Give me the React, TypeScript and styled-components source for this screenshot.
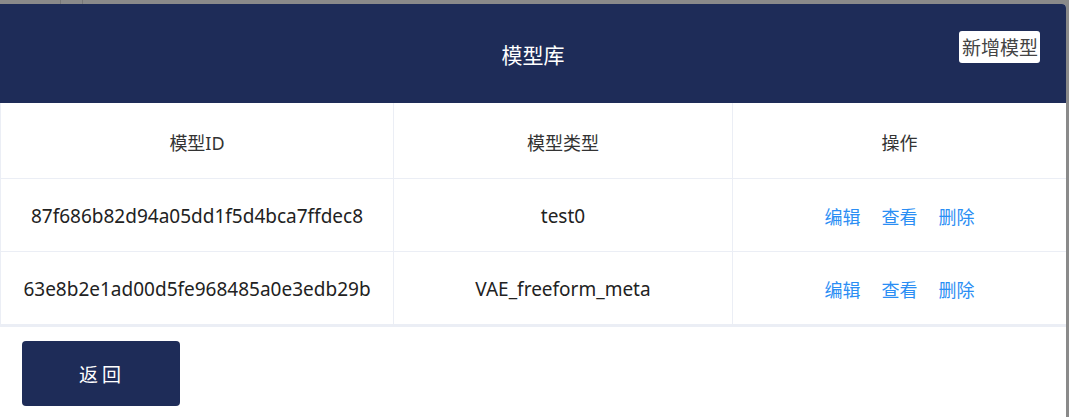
import styled, { createGlobalStyle } from 'styled-components';

const GlobalStyle = createGlobalStyle`
    *, *::before, *::after {
        box-sizing: border-box;
    }
    html, body {
        margin: 0;
        padding: 0;
        background: #8a8a8a;
        font-family: "Noto Sans", "Noto Sans CJK SC", sans-serif;
    }
`;

const Page = styled.div`
    height: 417px;
    display: flex;
    flex-direction: column;
    background: #8a8a8a;
    overflow: hidden;
`;

const BackStrip = styled.div`
    height: 4px;
    flex-shrink: 0;
    display: flex;
    padding-left: 60px;
    gap: 21px;
`;

const BackLine = styled.div`
    width: 1px;
    background: #777;
`;

const Modal = styled.div`
    flex: 1;
    margin-right: 3px;
    background: #fff;
    border-top-right-radius: 4px;
    display: flex;
    flex-direction: column;
    overflow: hidden;
`;

const Header = styled.div`
    height: 99px;
    flex-shrink: 0;
    background: #1e2c58;
    display: grid;
    grid-template-columns: 1fr auto 1fr;
    align-items: center;
    padding-right: 26px;
`;

const Title = styled.h1`
    grid-column: 2;
    margin: 0;
    font-size: 21px;
    font-weight: 400;
    color: #fff;
    padding-left: 26px;
`;

const AddButton = styled.button`
    grid-column: 3;
    justify-self: end;
    align-self: start;
    margin-top: 27px;
    height: 32px;
    padding: 0 2px 0 3px;
    border: none;
    border-radius: 3px;
    background: #fff;
    color: #444;
    font-family: "Noto Sans CJK SC", sans-serif;
    font-size: 19px;
    line-height: 32px;
    cursor: pointer;
`;

const Table = styled.div`
    flex-shrink: 0;
    display: grid;
    grid-template-columns: 393px 339px 1fr;
    border-left: 1px solid #ebeef5;
    border-bottom: 2px solid #ebeef5;
`;

const Cell = styled.div<{ $head?: boolean }>`
    height: ${p => (p.$head ? '76px' : '73px')};
    display: flex;
    align-items: center;
    justify-content: center;
    gap: 21px;
    padding-top: 2px;
    border-right: 1px solid #ebeef5;
    border-bottom: 1px solid #ebeef5;
    font-size: ${p => (p.$head ? '18px' : '19px')};
    color: ${p => (p.$head ? '#333' : '#222')};
    &:nth-child(3n) {
        border-right: none;
    }
`;

const Action = styled.a`
    color: #2b8ef4;
    font-size: 18px;
    cursor: pointer;
`;

const Footer = styled.div`
    padding: 14px 22px 0;
`;

const BackButton = styled.button`
    width: 158px;
    height: 65px;
    border: none;
    border-radius: 4px;
    background: #1e2c58;
    color: #fff;
    font-family: "Noto Sans CJK SC", sans-serif;
    font-size: 19px;
    letter-spacing: 4px;
    padding-left: 8px;
    cursor: pointer;
`;

const models = [
    { id: '87f686b82d94a05dd1f5d4bca7ffdec8', type: 'test0' },
    { id: '63e8b2e1ad00d5fe968485a0e3edb29b', type: 'VAE_freeform_meta' },
];

const App = () => (
    <Page>
        <GlobalStyle />
        <BackStrip>
            <BackLine />
            <BackLine />
        </BackStrip>
        <Modal>
            <Header>
                <Title>模型库</Title>
                <AddButton type="button">新增模型</AddButton>
            </Header>
            <Table>
                <Cell $head>模型ID</Cell>
                <Cell $head>模型类型</Cell>
                <Cell $head>操作</Cell>
                {models.map(m => [
                    <Cell key={m.id + '-id'}>{m.id}</Cell>,
                    <Cell key={m.id + '-type'}>{m.type}</Cell>,
                    <Cell key={m.id + '-ops'}>
                        <Action>编辑</Action>
                        <Action>查看</Action>
                        <Action>删除</Action>
                    </Cell>,
                ])}
            </Table>
            <Footer>
                <BackButton type="button">返回</BackButton>
            </Footer>
        </Modal>
    </Page>
);

export default App;
